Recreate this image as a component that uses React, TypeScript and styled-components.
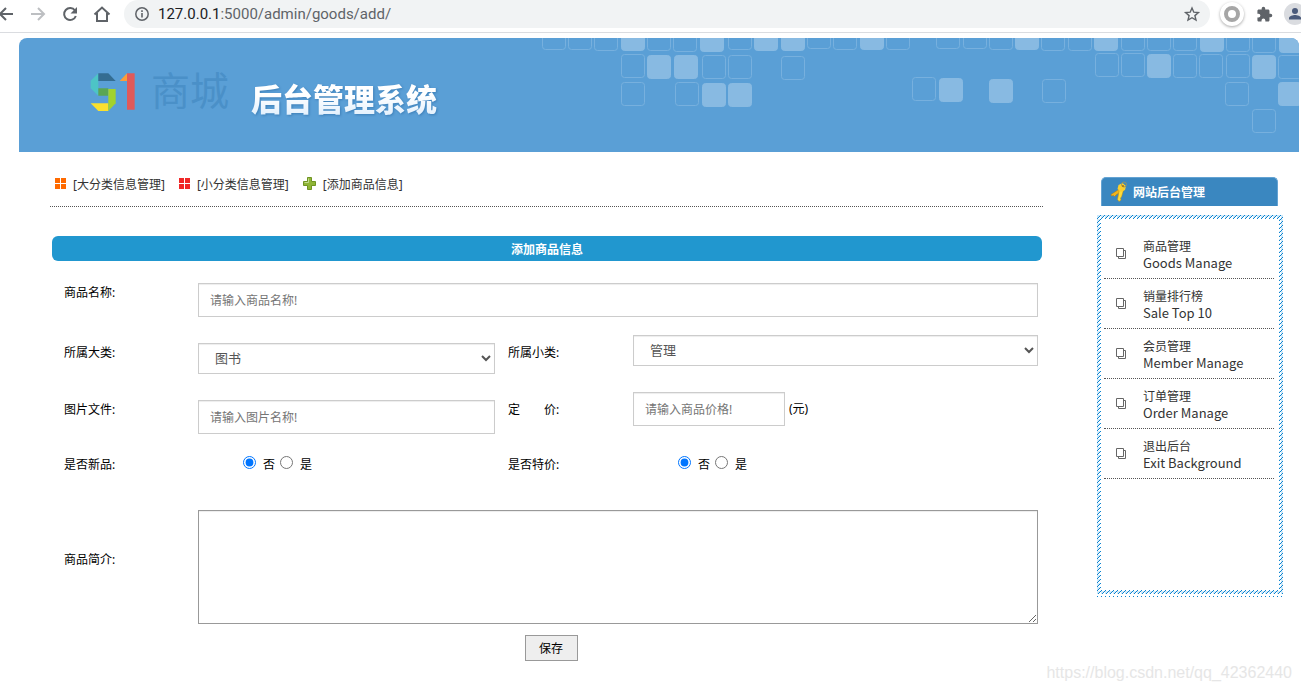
import React from "react";
import styled, { createGlobalStyle } from "styled-components";

const GlobalStyle = createGlobalStyle`
  *, *::before, *::after { box-sizing: border-box; }
  body {
    margin: 0;
    background: #fff;
    color: #000;
    font: 12px/16px "Noto Sans", "Noto Sans CJK SC", sans-serif;
  }
  #root { min-height: 100vh; position: relative; }
`;

/* ---------- browser bar ---------- */

const BrowserBar = styled.header`
  display: flex;
  align-items: flex-start;
  height: 33px;
  border-bottom: 1px solid #dadce0;
  overflow: hidden;
`;

const NavButtons = styled.nav`
  display: flex;
  gap: 12px;
  width: 124px;
  margin-left: -4px;
  margin-right: 4px;
  padding-top: 4px;
  flex: none;
`;

const IconButton = styled.button<{ $faded?: boolean }>`
  display: block;
  flex: none;
  width: 20px;
  height: 20px;
  padding: 0;
  border: 0;
  background: none;
  color: ${(p) => (p.$faded ? "#bdbfc2" : "#5f6368")};
  svg { display: block; margin: auto; }
`;

const AddressBar = styled.div`
  flex: 1;
  display: flex;
  align-items: center;
  height: 28px;
  padding: 0 8px;
  gap: 6px;
  border-radius: 14px;
  background: #f1f3f4;
`;

const Address = styled.div`
  flex: 1;
  font: 15px/20px Roboto, sans-serif;
  color: #5f6368;
  b { font-weight: 400; color: #202124; }
`;

const Extensions = styled.div`
  display: flex;
  flex: none;
  align-items: center;
  gap: 10px;
  width: 91px;
  height: 28px;
  padding-left: 10px;
`;

const RingButton = styled.button`
  flex: none;
  width: 24px;
  height: 24px;
  padding: 4px;
  border: 0;
  border-radius: 50%;
  background: #fff;
  box-shadow: 0 1px 3px rgba(0, 0, 0, 0.35);
  svg { display: block; }
`;

const Avatar = styled.button`
  flex: none;
  width: 22px;
  height: 22px;
  padding: 0;
  border: 0;
  border-radius: 50%;
  background: #dadce0;
  svg { display: block; }
`;

/* ---------- banner ---------- */

const Page = styled.div`
  padding: 5px 2px 0 19px;
`;

const Banner = styled.div`
  position: relative;
  display: flex;
  height: 114px;
  padding-left: 71px;
  border-radius: 8px 8px 0 0;
  background: #5a9fd6;
  overflow: hidden;
`;

const Tiles = styled.svg`
  position: absolute;
  top: 0;
  right: 0;
`;

const Logo = styled.svg`
  flex: none;
  margin: 35px 15px 0 0;
`;

const ShopName = styled.span`
  width: 100px;
  padding-top: 30px;
  font: 400 39px/40px "Noto Sans CJK SC", sans-serif;
  color: #4a90c8;
`;

const SystemName = styled.h1`
  margin: 0;
  padding-top: 40px;
  font: 900 31px/40px "Noto Sans CJK SC", sans-serif;
  color: transparent;
  background: linear-gradient(#fff 50%, #cfe6fb 80%);
  background-clip: text;
  filter: drop-shadow(1px 1px 1px #3d7fb8);
`;

/* ---------- main column ---------- */

const Columns = styled.div`
  display: flex;
  gap: 54px;
  padding: 25px 16px 0 31px;
`;

const Main = styled.main`
  flex: 1;
  min-width: 0;
`;

const Toolbar = styled.nav`
  display: flex;
  gap: 14px;
  height: 30px;
  margin-bottom: 29px;
  padding-left: 5px;
  border-bottom: 1px dotted #555;
`;

const ToolLink = styled.a`
  display: flex;
  gap: 7px;
  height: 16px;
  color: #333;
  text-decoration: none;
  line-height: 16px;
  white-space: nowrap;
`;

const FormTitle = styled.h2`
  margin: 0 1px 22px 2px;
  border-radius: 6px;
  background: #2197cf;
  color: #fff;
  font: 700 12px/25px "Noto Sans CJK SC", sans-serif;
  text-align: center;
`;

const Form = styled.form`
  display: flex;
  flex-direction: column;
  gap: 18px;
  padding: 0 5px 0 14px;
`;

const Row = styled.div`
  display: grid;
  grid-template-columns: 134px 297fr 138px 405fr;
  align-items: start;
`;

const StaggeredRow = styled(Row)`
  > label { padding-top: 8px; }
  > :nth-child(2) { margin-top: 8px; }
`;

const RadioRow = styled(Row)`
  line-height: 26px;
`;

const TextRow = styled(Row)`
  align-items: center;
`;

const Label = styled.label<{ $second?: boolean }>`
  padding-left: ${(p) => (p.$second ? 13 : 0)}px;
  line-height: 20px;
  white-space: pre;
`;

const Caption = styled.span<{ $second?: boolean }>`
  padding-left: ${(p) => (p.$second ? 13 : 0)}px;
`;

const TextInput = styled.input<{ $wide?: boolean; $short?: boolean }>`
  width: ${(p) => (p.$short ? "152px" : "100%")};
  height: 34px;
  padding: 0 11px;
  grid-column: ${(p) => (p.$wide ? "2 / -1" : "auto")};
  border: 1px solid #ccc;
  background: #fff;
  box-shadow: inset 0 1px 1px rgba(0, 0, 0, 0.075);
  color: #555;
  font: 12px/20px "Noto Sans", "Noto Sans CJK SC", sans-serif;
  &::placeholder { color: #757575; }
`;

const Select = styled.select`
  width: 100%;
  height: 31px;
  padding: 0 12px 2px;
  border: 1px solid #ccc;
  border-radius: 0;
  background: #fff;
  box-shadow: inset 0 1px 1px rgba(0, 0, 0, 0.075);
  color: #555;
  font: 13px/20px "Noto Sans CJK SC", sans-serif;
`;

const PriceField = styled.div`
  display: flex;
  align-items: center;
  gap: 4px;
`;

const Choices = styled.div`
  display: flex;
  gap: 5px;
  padding-left: 45px;
  label { display: flex; align-items: center; gap: 7px; }
  input { width: 13px; height: 13px; margin: 0 0 5px; }
`;

const Description = styled.textarea`
  display: block;
  grid-column: 2 / -1;
  height: 114px;
  margin-top: 14px;
  border: 1px solid #999;
  box-shadow: inset 0 1px 1px rgba(0, 0, 0, 0.075);
  resize: vertical;
`;

const SaveButton = styled.button`
  align-self: center;
  width: 53px;
  height: 26px;
  margin-top: -7px;
  padding: 0;
  border: 1px solid #999;
  background: #eee;
  color: #000;
  font: 12px/20px "Noto Sans CJK SC", sans-serif;
`;

/* ---------- sidebar ---------- */

const Sidebar = styled.aside`
  flex: none;
  width: 186px;
`;

const SideTitle = styled.h2`
  display: flex;
  align-items: center;
  gap: 5px;
  height: 29px;
  margin: 0 5px 9px 4px;
  padding-left: 8px;
  border: 1px solid #64a3d3;
  border-bottom: 0;
  border-radius: 5px 5px 0 0;
  background: #3a87c0;
  color: #fff;
  font: 700 12px/28px "Noto Sans CJK SC", sans-serif;
`;

const Hatched = styled.div`
  padding: 4px;
  background: linear-gradient(135deg, #cfe9fa 0 38%, #0d84cf 38% 62%, #fff 62%) 0 0 / 4px 4px;
`;

const Menu = styled.ul`
  height: 371px;
  margin: 0;
  padding: 10px 5px 0 3px;
  background: #fff;
  list-style: none;
`;

const HatchFoot = styled.div`
  height: 1px;
  margin-top: 2px;
  background: repeating-linear-gradient(90deg, #0d84cf 0 1px, #fff 1px 4px);
`;

const MenuItem = styled.li`
  border-bottom: 1px dotted #555;
`;

const MenuLink = styled.a`
  display: flex;
  align-items: center;
  gap: 16px;
  height: 49px;
  padding: 2px 0 0 12px;
  color: #333;
  text-decoration: none;
  span { display: block; }
  svg { margin-bottom: 1px; }
`;

const English = styled.span`
  font: 13px/16px "Noto Sans CJK SC", sans-serif;
`;

const Watermark = styled.div`
  position: absolute;
  right: 9px;
  bottom: 7px;
  color: #e6e6e6;
  font: 16px/20px "Liberation Sans", sans-serif;
`;

/* ---------- drawings ---------- */

/* x, y, filled */
const tiles: [number, number, boolean][] = [
  [0, -12, false], [26, -12, false], [52, -11, false], [79, -11, true], [105, -11, false],
  [131, -10, false], [158, -10, true], [186, -12, false], [212, -11, true], [239, -11, true],
  [265, -13, false], [291, -12, false], [318, -12, true], [344, -12, false], [394, -13, false],
  [421, -13, false], [447, -12, false], [473, -12, true], [499, -11, false], [526, -11, false],
  [552, -11, true], [579, -11, false], [605, -11, false], [631, -11, false], [658, -10, true],
  [684, -10, false], [710, -9, false], [737, -9, true],
  [79, 16, false], [105, 17, true], [132, 17, true], [160, 17, false], [186, 17, false],
  [239, 18, false], [553, 15, false], [579, 15, false], [605, 16, true], [631, 16, false],
  [657, 16, false], [684, 16, false], [710, 17, true], [736, 17, false],
  [79, 44, false], [133, 44, false], [160, 45, true], [186, 45, true], [370, 39, false],
  [397, 40, true], [447, 41, true], [500, 41, false], [683, 44, false], [736, 44, true],
  [710, 71, false],
];

const SquaresIcon = ({ color }: { color: string }) => (
  <svg width="11" height="14" viewBox="0 0 11 14" fill={color}>
    <path d="M0 1h5v5H0zM6 1h5v5H6zM0 7h5v5H0zM6 7h5v5H6z" />
  </svg>
);

const PlusIcon = () => (
  <svg width="13" height="13" viewBox="0 0 13 13">
    <path d="M4.500.5h4v4h4v4h-4v4h-4v-4h-4v-4h4z" fill="#8fb536" stroke="#6f9422" />
    <path d="M5.500 1.500v4h-4" fill="none" stroke="#c5dd8e" />
  </svg>
);

const KeyIcon = () => (
  <svg width="18" height="22" viewBox="0 0 18 22">
    <path d="M11 7L1 13.500l.5 1.500 2-.5 1 1 1.500-1.500 5-3.500z" fill="#f0b51c" stroke="#b77a08" strokeWidth=".5" />
    <path d="M9.500 8l-2 10.500 1.500 2 2-1.500-.5-2 1-1 2-7z" fill="#ffdc3a" stroke="#c38a0a" strokeWidth=".5" />
    <path d="M8.500 4l4-2 3.500 3-1 4-4 2-3.500-3z" fill="#fccf2d" />
    <circle cx="14" cy="3.500" r="2.500" fill="none" stroke="#8f9468" />
    <circle cx="13" cy="5" r="1" fill="#a8740c" />
  </svg>
);

const PagesIcon = () => (
  <svg width="11" height="12" viewBox="0 0 11 12" fill="none" stroke="#666">
    <path d="M.5.5h7v8h-7zM2.500 10.500h7V2.500M8 2.500h1.500M2.500 9v1.500" />
  </svg>
);

const menu = [
  ["商品管理", "Goods Manage"],
  ["销量排行榜", "Sale Top 10"],
  ["会员管理", "Member Manage"],
  ["订单管理", "Order Manage"],
  ["退出后台", "Exit Background"],
];

const YesNo = ({ name, label }: { name: string; label: string }) => (
  <Choices role="radiogroup" aria-label={label}>
    <label><input type="radio" name={name} defaultChecked />否</label>
    <label><input type="radio" name={name} />是</label>
  </Choices>
);

export default function App() {
  return (
    <>
      <GlobalStyle />
      <BrowserBar>
        <NavButtons>
          <IconButton aria-label="Back">
            <svg width="20" height="20" viewBox="0 0 20 20" fill="none" stroke="currentColor" strokeWidth="2">
              <path d="M17 10H4M10 4l-6 6 6 6" />
            </svg>
          </IconButton>
          <IconButton aria-label="Forward" $faded>
            <svg width="20" height="20" viewBox="0 0 20 20" fill="none" stroke="currentColor" strokeWidth="2">
              <path d="M3 10h13M10 4l6 6-6 6" />
            </svg>
          </IconButton>
          <IconButton aria-label="Reload">
            <svg width="20" height="20" viewBox="0 0 20 20">
              <path d="M15 6.500A6 6 0 1 0 15.800 12" fill="none" stroke="currentColor" strokeWidth="2" />
              <path d="M17 3v6.500h-6.500z" fill="currentColor" />
            </svg>
          </IconButton>
          <IconButton aria-label="Home">
            <svg width="20" height="20" viewBox="0 0 20 20" fill="none" stroke="currentColor" strokeWidth="2">
              <path d="M2.500 10.500L10 3.500l7.500 7M5 9v8h10V9" />
            </svg>
          </IconButton>
        </NavButtons>
        <AddressBar>
          <IconButton aria-label="Site information">
            <svg width="20" height="20" viewBox="0 0 20 20">
              <circle cx="10" cy="10" r="6.200" fill="none" stroke="currentColor" strokeWidth="1.500" />
              <path d="M9.200 9h1.600v4.500H9.200zM9.200 6.300h1.600v1.600H9.200z" fill="currentColor" />
            </svg>
          </IconButton>
          <Address><b>127.0.0.1</b>:5000/admin/goods/add/</Address>
          <IconButton aria-label="Bookmark">
            <svg width="20" height="20" viewBox="0 0 20 20" fill="none" stroke="currentColor" strokeWidth="1.400">
              <path d="M10 4l1.800 4.200 4.600.4-3.500 3 1.100 4.500-4-2.400-4 2.400 1.100-4.500-3.500-3 4.600-.4z" />
            </svg>
          </IconButton>
        </AddressBar>
        <Extensions>
          <RingButton aria-label="Extension">
            <svg width="16" height="16" viewBox="0 0 16 16">
              <circle cx="8" cy="8" r="6" fill="none" stroke="#a6a6a6" strokeWidth="4" />
            </svg>
          </RingButton>
          <IconButton aria-label="Extensions">
            <svg width="17" height="17" viewBox="0 0 24 24" fill="currentColor">
              <path d="M20.500 11H19V7c0-1.100-.9-2-2-2h-4V3.500a2.500 2.500 0 0 0-5 0V5H4c-1.100 0-2 .9-2 2v3.800h1.500a2.700 2.700 0 0 1 0 5.400H2V20c0 1.100.9 2 2 2h3.800v-1.500a2.700 2.700 0 0 1 5.400 0V22H17c1.100 0 2-.9 2-2v-4h1.500a2.500 2.500 0 0 0 0-5z" />
            </svg>
          </IconButton>
          <Avatar aria-label="Profile">
            <svg width="22" height="22" viewBox="0 0 22 22" fill="#4a5a7a">
              <circle cx="11" cy="8" r="3" />
              <path d="M5 16.500v-1.500c0-2 4-3 6-3s6 1 6 3v1.500z" />
            </svg>
          </Avatar>
        </Extensions>
      </BrowserBar>

      <Page>
        <Banner>
          <Tiles width="757" height="114" viewBox="0 0 757 114" aria-hidden="true">
            {tiles.map(([x, y, filled], i) => (
              <rect
                key={i}
                x={x + 0.5}
                y={y + 0.5}
                width="23"
                height="23"
                rx="3"
                fill={filled ? "#88bae2" : "none"}
                stroke={filled ? "#88bae2" : "#77b0de"}
              />
            ))}
          </Tiles>
          <Logo width="46" height="38" viewBox="90 69 138 114" role="img" aria-label="51">
            <path d="M92 92l23-22v67l-23-22z" fill="#4dc4c6" />
            <path d="M115 70h30l22 23h-52z" fill="#346d92" />
            <path d="M115 115h30v22h-30z" fill="#5aa653" />
            <path d="M92 160h53v23h-30z" fill="#fbe02e" />
            <path d="M145 117h22v43l-22 23z" fill="#a2d22d" />
            <path d="M179 93l22-23v23z" fill="#fb9d3a" />
            <path d="M201 70h23v109h-23z" fill="#e05a5a" />
          </Logo>
          <ShopName>商城</ShopName>
          <SystemName>后台管理系统</SystemName>
        </Banner>

        <Columns>
          <Main>
            <Toolbar>
              <ToolLink href="#"><SquaresIcon color="#ff6a00" />[大分类信息管理]</ToolLink>
              <ToolLink href="#"><SquaresIcon color="#f02828" />[小分类信息管理]</ToolLink>
              <ToolLink href="#"><PlusIcon />[添加商品信息]</ToolLink>
            </Toolbar>
            <FormTitle>添加商品信息</FormTitle>
            <Form onSubmit={(e) => e.preventDefault()}>
              <Row>
                <Label htmlFor="name">商品名称:</Label>
                <TextInput id="name" $wide placeholder="请输入商品名称!" />
              </Row>
              <StaggeredRow>
                <Label htmlFor="big">所属大类:</Label>
                <Select id="big"><option>图书</option></Select>
                <Label htmlFor="small" $second>所属小类:</Label>
                <Select id="small"><option>管理</option></Select>
              </StaggeredRow>
              <StaggeredRow>
                <Label htmlFor="picture">图片文件:</Label>
                <TextInput id="picture" placeholder="请输入图片名称!" />
                <Label htmlFor="price" $second>定{"\u3000\u3000"}价:</Label>
                <PriceField>
                  <TextInput id="price" $short placeholder="请输入商品价格!" />
                  (元)
                </PriceField>
              </StaggeredRow>
              <RadioRow>
                <Caption>是否新品:</Caption>
                <YesNo name="isNew" label="是否新品" />
                <Caption $second>是否特价:</Caption>
                <YesNo name="isSale" label="是否特价" />
              </RadioRow>
              <TextRow>
                <Label htmlFor="intro">商品简介:</Label>
                <Description id="intro" />
              </TextRow>
              <SaveButton type="submit">保存</SaveButton>
            </Form>
          </Main>

          <Sidebar>
            <SideTitle><KeyIcon />网站后台管理</SideTitle>
            <Hatched>
              <Menu>
                {menu.map(([zh, en]) => (
                  <MenuItem key={en}>
                    <MenuLink href="#">
                      <PagesIcon />
                      <div>
                        <span>{zh}</span>
                        <English>{en}</English>
                      </div>
                    </MenuLink>
                  </MenuItem>
                ))}
              </Menu>
            </Hatched>
            <HatchFoot />
          </Sidebar>
        </Columns>
      </Page>
      <Watermark>https://blog.csdn.net/qq_42362440</Watermark>
    </>
  );
}
